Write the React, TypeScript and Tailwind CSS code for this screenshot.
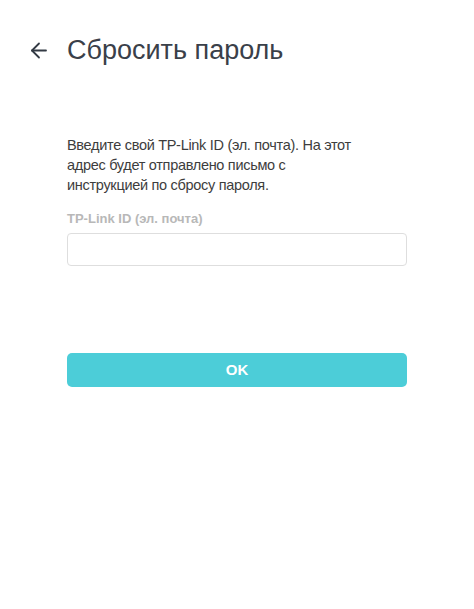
import { ArrowLeft } from 'lucide-react';

export default function App() {
  return (
    <div className="min-h-[609px] w-full bg-white font-['Liberation_Sans',Arial,sans-serif]">
      <div className="flex items-center pt-[33px] pl-[27px]">
        <button className="flex h-6 w-6 items-center justify-center text-[#333a44]">
          <ArrowLeft className="h-[25px] w-[25px]" strokeWidth={1.8} />
        </button>
        <h1 className="ml-[16px] text-[27px] leading-[34px] font-normal text-[#3a4049]">Сбросить пароль</h1>
      </div>
      <div className="px-[67px] pt-[68px]">
        <p className="w-[285px] text-[14.5px] leading-[20px] tracking-[-0.3px] text-[#3d3d3d]">
          Введите свой TP-Link ID (эл. почта). На этот адрес будет отправлено письмо с инструкцией по сбросу пароля.
        </p>
        <label className="mt-[16px] block text-[13px] leading-[16px] font-bold text-[#b8b8b8]">TP-Link ID (эл. почта)</label>
        <input className="mt-[6px] block h-[33px] w-[340px] rounded-[4px] border border-[#dedede] bg-white px-3 text-[14px] outline-none" />
        <button className="mt-[87px] flex h-[34px] w-[340px] items-center justify-center rounded-[5px] bg-[#4ccdd8] text-[15px] font-bold text-white">
          OK
        </button>
      </div>
    </div>
  );
}
